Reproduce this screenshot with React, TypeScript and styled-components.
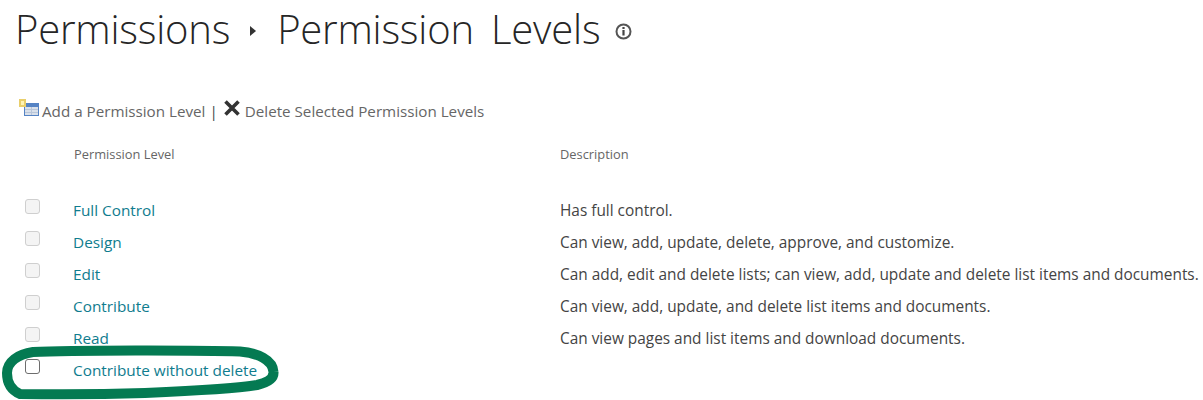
import { Fragment } from "react";
import styled, { createGlobalStyle } from "styled-components";

const GlobalStyle = createGlobalStyle`
  html, body {
    margin: 0;
    padding: 0;
    background: #ffffff;
    overflow: hidden;
  }
`;

const Page = styled.div`
  position: relative;
  width: 1203px;
  height: 400px;
  overflow: hidden;
  font-family: "Open Sans", "Liberation Sans", sans-serif;
`;

const TitleRow = styled.div`
  display: flex;
  align-items: center;
  height: 56px;
  padding-left: 15px;
  color: #262626;
  font-size: 40px;
  font-weight: 300;
  letter-spacing: -0.2px;
  word-spacing: 7px;
  white-space: nowrap;
`;

const TitleArrow = styled.svg`
  width: 8px;
  height: 12px;
  margin: 6px 20px 0 19px;
`;

const InfoIcon = styled.svg`
  width: 17px;
  height: 17px;
  margin: 6px 0 0 15px;
`;

const Toolbar = styled.div`
  display: flex;
  align-items: center;
  height: 26px;
  margin-top: 42px;
  padding-left: 18px;
  color: #666666;
  font-size: 15.2px;
  white-space: nowrap;
`;

const AddIcon = styled.svg`
  flex: none;
  margin-top: -4px;
`;

const DeleteIcon = styled.svg`
  flex: none;
  margin: -6px 4px 0 0;
`;

const Divider = styled.span`
  margin: 0 5px 0 4px;
  color: #444444;
`;

const Table = styled.div`
  display: grid;
  grid-template-columns: 73px 487px 1fr;
  grid-template-rows: 32px 24px;
  grid-auto-rows: 32px;
  margin-top: 14px;
  white-space: nowrap;
`;

const HeadCell = styled.div<{ $offset?: number }>`
  padding-left: ${({ $offset }) => $offset ?? 0}px;
  color: #666666;
  font-size: 12.85px;
  line-height: 32px;
`;

const Spacer = styled.div`
  grid-column: 1 / -1;
`;

const CheckCell = styled.div`
  padding: 5px 0 0 25px;
`;

const CheckBox = styled.span<{ $active?: boolean }>`
  display: block;
  box-sizing: border-box;
  width: 15px;
  height: 15px;
  border: 1px solid ${({ $active }) => ($active ? "#6d6d6d" : "#cfcfcf")};
  border-radius: 3px;
  background: ${({ $active }) => ($active ? "#ffffff" : "#f4f4f4")};
`;

const NameCell = styled.a`
  color: #0f7c8e;
  font-size: 15.35px;
  line-height: 32px;
  text-decoration: none;
`;

const DescCell = styled.div`
  padding-top: 1px;
  color: #444444;
  font-size: 15.4px;
  line-height: 32px;
`;

const Circled = styled.svg`
  position: absolute;
  left: 0;
  top: 340px;
`;

const levels = [
  { name: "Full Control", desc: "Has full control." },
  { name: "Design", desc: "Can view, add, update, delete, approve, and customize." },
  { name: "Edit", desc: "Can add, edit and delete lists; can view, add, update and delete list items and documents." },
  { name: "Contribute", desc: "Can view, add, update, and delete list items and documents." },
  { name: "Read", desc: "Can view pages and list items and download documents." },
  { name: "Contribute without delete", desc: "", active: true },
];

export default function App() {
  return (
    <Page>
      <GlobalStyle />
      <TitleRow>
        Permissions
        <TitleArrow viewBox="0 0 8 12">
          <path d="M1 1l6 5-6 5z" fill="#333" />
        </TitleArrow>
        Permission Levels
        <InfoIcon viewBox="0 0 17 17">
          <circle cx="8.5" cy="8.5" r="7" fill="none" stroke="#555" strokeWidth="2" />
          <rect x="7.4" y="7" width="2.2" height="5.5" fill="#444" />
          <rect x="7.4" y="4" width="2.2" height="2" fill="#444" />
        </InfoIcon>
      </TitleRow>

      <Toolbar>
        <AddIcon width="24" height="20" viewBox="0 0 24 20">
          <rect x="6" y="4" width="15" height="13" fill="#5583c4" />
          <rect x="7" y="8" width="13" height="8" fill="#d9e0ea" />
          <path d="M7 10.5h13M7 13.5h13M13.5 8v8" stroke="#b9c6d9" strokeWidth="1" />
          <rect x="1" y="0" width="7" height="8" fill="#e9cf6c" />
          <rect x="3" y="2" width="3" height="4" fill="#fdf3b5" />
        </AddIcon>
        Add a Permission Level
        <Divider>|</Divider>
        <DeleteIcon width="18" height="18" viewBox="0 0 18 18">
          <path d="M2.5 2.5l13 13M15.5 2.5l-13 13" stroke="#333" strokeWidth="3.6" />
        </DeleteIcon>
        Delete Selected Permission Levels
      </Toolbar>

      <Table>
        <HeadCell />
        <HeadCell $offset={1}>Permission Level</HeadCell>
        <HeadCell>Description</HeadCell>
        <Spacer />
        {levels.map((level) => (
          <Fragment key={level.name}>
            <CheckCell>
              <CheckBox $active={level.active} />
            </CheckCell>
            <NameCell href="#">{level.name}</NameCell>
            <DescCell>{level.desc}</DescCell>
          </Fragment>
        ))}
      </Table>

      <Circled width="290" height="60" viewBox="0 0 290 60">
        <path
          d="M20 54C11 50 7 43 7 33C7 22 18 14 33 12C70 10 200 10 240 11.5C258 13 273 20 273.5 32C274 39 266 43 257 45C235 49 190 51 145 53C100 54.500 50 54.500 20 54Z"
          fill="none"
          stroke="#047a52"
          strokeWidth="10"
        />
      </Circled>
    </Page>
  );
}
